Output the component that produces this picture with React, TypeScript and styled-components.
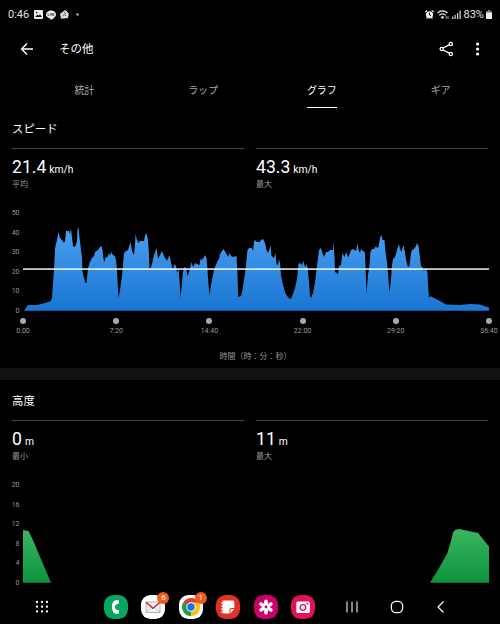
import React from 'react';
import styled, { createGlobalStyle } from 'styled-components';

const GlobalStyle = createGlobalStyle`
  body {
    margin: 0;
    background: #000;
    color: #fff;
    font-family: Roboto, 'Noto Sans CJK JP', sans-serif;
    overflow: hidden;
  }
`;

const Screen = styled.div`
  display: flex;
  flex-direction: column;
  width: 500px;
  height: 624px;
  overflow: hidden;
`;

const StatusBar = styled.div`
  display: flex;
  align-items: center;
  justify-content: space-between;
  box-sizing: border-box;
  height: 29px;
  padding: 0 8px;
`;

const StatusGroup = styled.div<{ $gap: number }>`
  display: flex;
  align-items: center;
  gap: ${({ $gap }) => $gap}px;
`;

const StatusText = styled.span<{ $width: number }>`
  width: ${({ $width }) => $width}px;
  color: #e0e0e0;
  font-size: 11px;
  line-height: 14px;
  white-space: nowrap;
`;

const AppBar = styled.header`
  display: flex;
  align-items: center;
  box-sizing: border-box;
  height: 39px;
  padding: 0 15px 0 20px;
`;

const Title = styled.h1`
  flex: 1;
  margin: 1px 0 0 25px;
  font-size: 11.5px;
  font-weight: 400;
  line-height: 16px;
`;

const AppBarActions = styled.div`
  display: flex;
  align-items: center;
  gap: 16px;
`;

const Tabs = styled.nav`
  display: grid;
  grid-template-columns: repeat(4, 1fr);
  height: 40px;
  padding-left: 25px;
`;

const Tab = styled.div<{ $active: boolean }>`
  display: flex;
  justify-content: center;
  color: ${({ $active }) => ($active ? '#fff' : '#aaa')};
  font-size: 10px;
  line-height: 14px;
`;

const TabLabel = styled.span<{ $active: boolean }>`
  box-sizing: border-box;
  padding-top: 16px;
  border-bottom: 1px solid ${({ $active }) => ($active ? '#fff' : 'transparent')};
`;

const Section = styled.section`
  box-sizing: border-box;
  height: 260px;
`;

const SectionTitle = styled.h2`
  height: 40px;
  margin: 0 0 0 12px;
  font-size: 11.4px;
  font-weight: 400;
  line-height: 43px;
`;

const Divider = styled.div`
  height: 12px;
  background: #111;
`;

const Metrics = styled.div`
  display: grid;
  grid-template-columns: 1fr 1fr;
  column-gap: 12px;
  height: 60px;
  padding: 0 12px;
`;

const Metric = styled.div`
  border-top: 1px solid #404040;
`;

const MetricValue = styled.div`
  height: 22px;
  padding-top: 7px;
  font-size: 17.6px;
  line-height: 22px;
`;

const MetricUnit = styled.span`
  margin-left: 3px;
  font-size: 10.3px;
`;

const MetricLabel = styled.div`
  padding-top: 1px;
  color: #999;
  font-size: 8px;
  line-height: 12px;
`;

const ChartRow = styled.div`
  display: flex;
  height: 108px;
`;

const YAxis = styled.div`
  display: flex;
  flex-direction: column;
  justify-content: space-between;
  width: 19.5px;
  height: 108px;
  margin-right: 3.5px;
  color: #999;
  font-size: 7px;
  line-height: 10px;
  text-align: right;
`;

const Plot = styled.svg`
  display: block;
  margin-top: 4px;
`;

const TimeAxis = styled.div`
  display: flex;
  justify-content: space-between;
  width: 466px;
  margin: 2px 0 0 23px;
`;

const Tick = styled.div`
  display: flex;
  flex-direction: column;
  align-items: center;
  width: 0;
  color: #999;
  font-size: 7px;
  line-height: 10px;
`;

const Dot = styled.span`
  width: 6px;
  height: 6px;
  margin-bottom: 2px;
  border-radius: 50%;
  background: #aaa;
`;

const AxisCaption = styled.div`
  margin-top: 15px;
  padding-left: 11px;
  color: #999;
  font-size: 8px;
  line-height: 12px;
  text-align: center;
`;

const ElevationSection = styled(Section)`
  height: 210px;
`;

const NavBar = styled.footer`
  display: flex;
  align-items: center;
  height: 34px;
  padding-left: 35px;
`;

const AppIcons = styled.div`
  display: flex;
  gap: 13.4px;
  margin: 0 31.5px 0 55px;
`;

const AppIcon = styled.div`
  position: relative;
  width: 24px;
  height: 24px;
`;

const Badge = styled.span`
  position: absolute;
  top: -3px;
  right: -4px;
  width: 12px;
  height: 12px;
  border-radius: 50%;
  background: #ee5c1c;
  font-size: 8px;
  line-height: 12px;
  text-align: center;
`;

const SystemKeys = styled.div`
  display: flex;
  align-items: center;
  gap: 30.5px;
`;

const speedPoints: [number, number][] = [
  [24, 310.5], [28, 305], [37, 305], [45, 303], [51, 301], [52, 297], [54, 270], [55, 248], [57, 240], [58.5, 232],
  [60, 238], [62, 240], [64, 243], [65, 241], [66, 231], [69, 231], [69.5, 234], [71, 229], [72, 238], [73, 246], [75, 247],
  [77, 241], [77.5, 230], [78.5, 227], [79, 233], [80, 242], [81, 250], [82, 258], [82.5, 272], [84, 278], [85.5, 283],
  [86.5, 283], [88, 268], [90, 262], [92, 258], [94, 256], [95, 252], [98, 250], [100, 247], [101.5, 246], [102.5, 250],
  [103.5, 259], [104.5, 262], [106, 256], [107, 258], [109, 253], [110, 256], [111, 252], [113, 255], [115, 256], [116, 260],
  [117, 270], [118, 290], [118.5, 298], [120, 290], [122, 276], [123, 265], [124, 253], [126, 251], [128, 250],
  [129, 247], [130.5, 242], [132, 251], [134, 255], [135, 245], [135.5, 234], [137, 240], [138.5, 243], [140, 241],
  [144, 241], [145, 236], [146.5, 233], [148, 240], [149, 255], [149.5, 271], [152, 264], [154, 255], [155.5, 251],
  [156.5, 248], [158, 259], [160, 255], [162, 251], [164, 256], [165, 258], [167, 261], [169.5, 255], [170.5, 260],
  [172, 267], [173, 269], [174.5, 264], [176, 266], [177, 273], [178.5, 268], [179.5, 280], [180.5, 298], [182, 283],
  [183, 272], [184.5, 267], [186, 268], [187.5, 276], [189, 272], [191, 264], [191.5, 262], [193, 267], [195, 263],
  [197, 264], [199.5, 265], [200.5, 259], [202, 260], [204, 257], [205, 255], [206.5, 258], [207.5, 270], [208.5, 285],
  [209.5, 295], [211, 285], [213, 275], [214.5, 268], [216, 265], [217.5, 261], [219, 259], [220, 254], [222, 251],
  [223.5, 249], [226, 253], [228, 257], [229.5, 253], [231, 256], [233, 257], [236.5, 256], [237.5, 275], [238.2, 297],
  [241, 296], [242.5, 290], [244, 280], [245.5, 270], [246.5, 260], [247.5, 250], [249, 248], [252, 248], [253, 251],
  [254, 242], [255, 240], [257, 242], [260, 242], [261, 240], [263, 239], [265, 243], [266.5, 250], [268, 253],
  [269.5, 249], [270.5, 245], [271.5, 256], [274, 258], [275.5, 253], [276.5, 264], [278, 265], [279, 259],
  [280, 263], [281, 276], [283, 285], [285, 292], [287, 296], [290, 299], [292, 297], [295, 288], [297, 279], [298.5, 264],
  [300, 263], [302, 265], [303.5, 261], [305, 267], [307, 264], [308, 272], [309, 282], [310, 296], [311, 298],
  [313, 293], [315, 283], [316.5, 270], [318, 258], [319, 250], [321, 248], [322, 252], [324, 257], [326, 252],
  [328, 252], [330, 250], [333, 250], [333.5, 242], [334.5, 257], [335, 272], [338, 274], [339, 266], [341, 265],
  [342.5, 253], [344.5, 257], [346, 252], [348, 257], [349, 256], [351, 250], [353, 249], [356, 251], [357.5, 243],
  [358.5, 250], [360, 253], [361, 249], [363, 251], [364.8, 252], [365.5, 265], [366.5, 294], [368, 275],
  [369.5, 265], [370.5, 252], [372, 249], [374, 249], [376, 246], [377, 248], [378.5, 247], [380, 238], [381.5, 235],
  [382.5, 240], [384.5, 240], [385.5, 252], [387, 262], [388, 273], [389.5, 293], [391, 280], [392, 265], [393, 259],
  [395, 257], [397, 250], [399, 244], [400, 249], [401.5, 252], [403.5, 245], [405, 253], [406.5, 262], [408, 267],
  [409.5, 266], [411, 253], [412, 250], [414, 249], [416, 246], [417, 243], [418.5, 246], [420, 258], [421, 266],
  [423, 268], [424, 271], [426, 268], [427.5, 273], [428, 285], [429, 298], [430, 296], [434, 298], [440, 301],
  [446, 304.5], [460, 305], [470, 304], [480, 304.5], [484, 306], [489, 307.5],
].map(([x, y]) => [x - 23, y - 212]);

const speedPath = `M0,98.7 ${speedPoints.map(([x, y]) => `L${x},${y}`).join(' ')} L466,98.7 Z`;

const speedTicks = ['50', '40', '30', '20', '10', '0'];
const elevationTicks = ['20', '16', '12', '8', '4', '0'];
const timeTicks = ['0:00', '7:20', '14:40', '22:00', '29:20', '36:40'];
const tabs = ['統計', 'ラップ', 'グラフ', 'ギア'];

interface MetricItem {
  value: string;
  unit: string;
  label: string;
}

const MetricList: React.FC<{ items: MetricItem[] }> = ({ items }) => (
  <Metrics>
    {items.map((item) => (
      <Metric key={item.label}>
        <MetricValue>
          {item.value}
          <MetricUnit>{item.unit}</MetricUnit>
        </MetricValue>
        <MetricLabel>{item.label}</MetricLabel>
      </Metric>
    ))}
  </Metrics>
);

const Axis: React.FC<{ ticks: string[] }> = ({ ticks }) => (
  <YAxis>
    {ticks.map((tick) => (
      <span key={tick}>{tick}</span>
    ))}
  </YAxis>
);

const StatusIcons = () => (
  <StatusGroup $gap={3.5}>
    <StatusText $width={22}>0:46</StatusText>
    <svg width="9" height="9" viewBox="0 0 9 9">
      <rect width="9" height="9" rx="1" fill="#eee" />
      <path d="M1.2 7 L3.4 4.6 L4.6 5.8 L6 4.2 L8 7 Z" fill="#111" />
      <circle cx="2.7" cy="2.6" r=".8" fill="#111" />
    </svg>
    <svg width="10" height="10" viewBox="0 0 10 10">
      <path d="M5 .5C2.2.5 0 2.2 0 4.5c0 2 1.8 3.6 4.2 4L4.8 10C7 8.8 10 7 10 4.5 10 2.2 7.8.5 5 .5Z" fill="#eee" />
      <path d="M2 3.3v2.2h1.2M4.3 3.3v2.2M5.3 5.5V3.4L6.5 5.4V3.3M8.4 3.5H7.5v2h.9" stroke="#222" strokeWidth=".6" fill="none" />
    </svg>
    <svg width="9" height="9" viewBox="0 0 9 9">
      <path d="M0 4 L2.5 2 L5.2 0 L8.8 3.5 L8 8 L1 8.8 Z" fill="#ddd" />
      <path d="M2.4 6 L4.2 4.4 L6.2 6 M4.2 2.2 L6 4" stroke="#333" strokeWidth=".8" fill="none" />
    </svg>
    <svg width="9" height="9" viewBox="0 0 9 9">
      <rect x="4.5" y="3.5" width="2" height="2" fill="#ddd" />
    </svg>
  </StatusGroup>
);

const SystemIcons = () => (
  <StatusGroup $gap={3}>
    <svg width="9" height="9" viewBox="0 0 9 9">
      <circle cx="4.5" cy="4.8" r="3.6" fill="#eee" />
      <path d="M.4 2 L2.2.5 M8.6 2 L6.8.5 M1.5 8.6 L2.5 7.5 M7.5 8.6 L6.5 7.5" stroke="#eee" strokeWidth="1.1" />
      <path d="M4.5 2.7V5L6 5.6" stroke="#111" fill="none" />
    </svg>
    <svg width="12" height="10" viewBox="0 0 12 10">
      <path d="M.5 3.2C3.2.2 7.8.2 10.5 3.2M2.3 5.3C4 3.4 7 3.4 8.7 5.3" stroke="#eee" strokeWidth="1.2" fill="none" />
      <path d="M5.5 9 L3.6 6.9C4.8 5.9 6.2 5.9 7.4 6.9Z" fill="#eee" />
      <path d="M9.2 6v3M11 6v3" stroke="#bbb" strokeWidth=".8" />
    </svg>
    <svg width="9" height="9" viewBox="0 0 9 9">
      <path d="M.7 9V6.5M3.1 9V5M5.6 9V3M8.1 9V.5" stroke="#ddd" strokeWidth="1.2" />
    </svg>
    <StatusText $width={19.5}>83%</StatusText>
    <svg width="6" height="9" viewBox="0 0 6 9">
      <rect x="2" width="2" height="1" fill="#888" />
      <rect y="1" width="6" height="8" rx=".8" fill="#777" />
      <rect y="2.5" width="6" height="6.5" rx=".8" fill="#eee" />
    </svg>
  </StatusGroup>
);

const PhoneIcon = () => (
  <svg width="24" height="24" viewBox="0 0 24 24">
    <rect width="24" height="24" rx="9.5" fill="#08a560" />
    <path
      d="M14.8 5.4 12.4 5C9.7 5.3 8 8.2 8 12s1.7 6.7 4.4 7l2.4-.4.3-3.2-2.5-.7c-1.2-.4-1.6-1.4-1.6-2.7s.4-2.3 1.6-2.7l2.5-.7Z"
      fill="#fff"
    />
  </svg>
);

const MailIcon = () => (
  <svg width="24" height="24" viewBox="0 0 24 24">
    <rect width="24" height="24" rx="9.5" fill="#fff" />
    <rect x="5" y="7" width="14" height="10.5" fill="#f4f4f4" stroke="#aaa" strokeWidth=".9" />
    <path d="M5.5 17 10 12.5M18.5 17 14 12.5" stroke="#aaa" strokeWidth=".8" />
    <path d="M5 7.3 12 13.4 19 7.3" stroke="#d21842" strokeWidth="1.4" fill="none" />
  </svg>
);

const ChromeIcon = () => (
  <svg width="24" height="24" viewBox="0 0 24 24">
    <rect width="24" height="24" rx="9.5" fill="#fff" />
    <path d="M12 12 4.2 7.5A9 9 0 0 1 19.8 7.5Z" fill="#e33b2e" />
    <path d="M12 12 19.8 7.5A9 9 0 0 1 12 21Z" fill="#fbc116" />
    <path d="M12 12 12 21A9 9 0 0 1 4.2 7.5Z" fill="#229a4b" />
    <path d="M12 7.5h7.8a9 9 0 0 1 .5 1.2L15 10Z" fill="#fbc116" />
    <circle cx="12" cy="12" r="4.7" fill="#fff" />
    <circle cx="12" cy="12" r="3.7" fill="#1a6fe8" />
  </svg>
);

const NotesIcon = () => (
  <svg width="24" height="24" viewBox="0 0 24 24">
    <rect width="24" height="24" rx="9.5" fill="#e23022" />
    <path d="M7.5 5.5H17q1.3 0 1.3 1.3V13H15q-1.5 0-1.5 1.5v4h-6q-1 0-1-1v-11q0-1 1-1Z" fill="#fff" />
    <path d="M18.3 14 14.5 18.3V15q0-1 1-1Z" fill="#fff" />
    <path d="M5 8h3M5 11h3M5 14h3M5 17h3" stroke="#fff" strokeWidth="1.1" />
  </svg>
);

const FlowerIcon = () => (
  <svg width="24" height="24" viewBox="0 0 24 24">
    <rect width="24" height="24" rx="9.5" fill="#cb0069" />
    {[0, 60, 120, 180, 240, 300].map((angle) => (
      <ellipse key={angle} cx="12" cy="7.3" rx="1.9" ry="2.9" fill="#fff" transform={`rotate(${angle} 12 12)`} />
    ))}
    <circle cx="12" cy="12" r="3.2" fill="#fff" />
    <circle cx="12" cy="12" r="1.4" fill="#cb0069" />
  </svg>
);

const CameraIcon = () => (
  <svg width="24" height="24" viewBox="0 0 24 24">
    <rect width="24" height="24" rx="9.5" fill="#e31157" />
    <rect x="5.3" y="6.5" width="13.6" height="11.5" rx="1.6" fill="#fff" />
    <circle cx="12" cy="12.5" r="2.8" fill="none" stroke="#e31157" strokeWidth="1.3" />
    <circle cx="16.4" cy="8.8" r="1" fill="#e31157" />
  </svg>
);

const App: React.FC = () => (
  <Screen>
    <GlobalStyle />
    <StatusBar>
      <StatusIcons />
      <SystemIcons />
    </StatusBar>
    <AppBar>
      <svg width="14" height="14" viewBox="0 0 14 14" fill="none" stroke="#fff" strokeWidth="1.4">
        <path d="M13 7H1.8M7 1.6 1.6 7 7 12.4" />
      </svg>
      <Title>その他</Title>
      <AppBarActions>
        <svg width="15" height="16" viewBox="0 0 15 16" fill="none" stroke="#fff" strokeWidth="1.3">
          <path d="M4 7 10.6 3.7M4 9 10.6 12.3" />
          <circle cx="2.7" cy="8" r="1.6" />
          <circle cx="11.8" cy="3" r="1.6" />
          <circle cx="11.8" cy="13" r="1.6" />
        </svg>
        <svg width="15" height="16" viewBox="0 0 15 16" fill="#fff">
          <circle cx="7.6" cy="3" r="1.6" />
          <circle cx="7.6" cy="8" r="1.6" />
          <circle cx="7.6" cy="13" r="1.6" />
        </svg>
      </AppBarActions>
    </AppBar>
    <Tabs>
      {tabs.map((tab) => (
        <Tab key={tab} $active={tab === 'グラフ'}>
          <TabLabel $active={tab === 'グラフ'}>{tab}</TabLabel>
        </Tab>
      ))}
    </Tabs>

    <Section>
      <SectionTitle>スピード</SectionTitle>
      <MetricList
        items={[
          { value: '21.4', unit: 'km/h', label: '平均' },
          { value: '43.3', unit: 'km/h', label: '最大' },
        ]}
      />
      <ChartRow>
        <Axis ticks={speedTicks} />
        <Plot width="466" height="99" viewBox="0 0 466 99">
          <defs>
            <linearGradient id="speed" x1="0" y1="14" x2="0" y2="98" gradientUnits="userSpaceOnUse">
              <stop offset="0" stopColor="#4c9ff2" />
              <stop offset="1" stopColor="#1976d2" />
            </linearGradient>
          </defs>
          <path d={speedPath} fill="url(#speed)" />
          <rect y="56.2" width="466" height="1.8" fill="#fff" fillOpacity=".8" />
        </Plot>
      </ChartRow>
      <TimeAxis>
        {timeTicks.map((tick) => (
          <Tick key={tick}>
            <Dot />
            {tick}
          </Tick>
        ))}
      </TimeAxis>
      <AxisCaption>時間（時：分：秒）</AxisCaption>
    </Section>

    <Divider />

    <ElevationSection>
      <SectionTitle>高度</SectionTitle>
      <MetricList
        items={[
          { value: '0', unit: 'm', label: '最小' },
          { value: '11', unit: 'm', label: '最大' },
        ]}
      />
      <ChartRow>
        <Axis ticks={elevationTicks} />
        <Plot width="466" height="99" viewBox="0 0 466 99">
          <defs>
            <linearGradient id="elevation" x1="0" y1="44" x2="0" y2="98" gradientUnits="userSpaceOnUse">
              <stop offset="0" stopColor="#3db560" />
              <stop offset="1" stopColor="#0c953e" />
            </linearGradient>
          </defs>
          <path
            d="M0,98.8 V46 L5.5,47 L9,54 L28,98.8 Z M407,98.8 L416,84 L424,70 L428,57 L430,48.5 L432,46 L436,45 L455,49 L466,62.5 V98.8 Z"
            fill="url(#elevation)"
          />
        </Plot>
      </ChartRow>
    </ElevationSection>

    <NavBar>
      <svg width="14" height="14" viewBox="0 0 14 14" fill="#fff">
        {[2, 6.7, 11.4].map((y) => [2, 7, 12].map((x) => <circle key={`${x}-${y}`} cx={x} cy={y} r="1.15" />))}
      </svg>
      <AppIcons>
        <AppIcon>
          <PhoneIcon />
        </AppIcon>
        <AppIcon>
          <MailIcon />
          <Badge>6</Badge>
        </AppIcon>
        <AppIcon>
          <ChromeIcon />
          <Badge>1</Badge>
        </AppIcon>
        <AppIcon>
          <NotesIcon />
        </AppIcon>
        <AppIcon>
          <FlowerIcon />
        </AppIcon>
        <AppIcon>
          <CameraIcon />
        </AppIcon>
      </AppIcons>
      <SystemKeys>
        <svg width="13" height="14" viewBox="0 0 13 14" stroke="#ddd" strokeWidth="1.2">
          <path d="M1 1.5v11M6 1.5v11M11 1.5v11" />
        </svg>
        <svg width="14" height="14" viewBox="0 0 14 14" fill="none" stroke="#fff" strokeWidth="1.2">
          <rect x="1.3" y="1.3" width="11.4" height="11.4" rx="4.6" />
        </svg>
        <svg width="14" height="14" viewBox="0 0 14 14" fill="none" stroke="#fff" strokeWidth="1.2">
          <path d="M9.5 1.5 4 7 9.5 12.5" />
        </svg>
      </SystemKeys>
    </NavBar>
  </Screen>
);

export default App;
